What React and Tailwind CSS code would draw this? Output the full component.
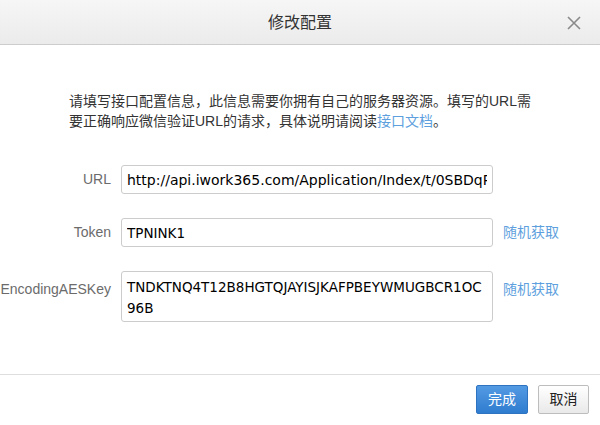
const inputClass =
  "h-[29px] w-[372px] rounded-[3px] border border-[#cccccc] bg-white px-[5px] text-[13.5px] text-black outline-none font-['DejaVu_Sans',sans-serif]";

const labelClass = "text-right text-[14px] text-[#6b6b6b]";
const linkClass = "text-[14px] text-[#5e9fde]";

export default function App() {
  return (
    <div className="flex h-[425px] w-[600px] flex-col overflow-hidden bg-white font-['Liberation_Sans','Noto_Sans_CJK_SC',sans-serif]">
      <div className="relative flex h-[45px] shrink-0 items-center justify-center border-b border-[#cdcdcd] bg-gradient-to-b from-[#f6f6f6] to-[#ebebeb]">
        <h1 className="pt-[1px] text-[16px] text-[#333333]">修改配置</h1>
        <button className="absolute right-[19px] top-[16px] text-[#8a8a8a]" aria-label="close">
          <svg width="14" height="14" viewBox="0 0 14 14" fill="none" stroke="currentColor" strokeWidth="1.6">
            <path d="M1 1 L13 13 M13 1 L1 13" />
          </svg>
        </button>
      </div>

      <div className="flex-1">
        <p className="pl-[69px] pr-[60px] pt-[46px] text-[14px] leading-[20px] text-[#333333]">
          请填写接口配置信息，此信息需要你拥有自己的服务器资源。填写的URL需
          <br />
          要正确响应微信验证URL的请求，具体说明请阅读
          <a className="text-[#5e9fde]">接口文档</a>。
        </p>

        <div className="mt-[34px] grid grid-cols-[111px_372px_auto] items-center gap-x-[10px] gap-y-[24px]">
          <label className={labelClass}>URL</label>
          <input
            className={`${inputClass} text-[14px]`}
            defaultValue="http://api.iwork365.com/Application/Index/t/0SBDqPbmLq"
          />
          <span />

          <label className={labelClass}>Token</label>
          <input className={inputClass} defaultValue="TPNINK1" />
          <a className={linkClass}>随机获取</a>

          <label className={`${labelClass} self-start pt-[8px]`}>EncodingAESKey</label>
          <textarea
            className={`${inputClass} h-[51px] resize-none overflow-hidden break-all pt-[5px] leading-[21px]`}
            defaultValue="TNDKTNQ4T12B8HGTQJAYISJKAFPBEYWMUGBCR1OC96B"
          />
          <a className={`${linkClass} self-start pt-[8px]`}>随机获取</a>
        </div>
      </div>

      <div className="flex h-[51px] shrink-0 justify-end gap-[10px] border-t border-[#dedede] pr-[11px] pt-[10px]">
        <button className="h-[29px] w-[52px] rounded-[2px] border border-[#2d73c2] bg-gradient-to-b from-[#539ae3] to-[#2f7ccf] text-[14px] text-white">
          完成
        </button>
        <button className="h-[29px] w-[51px] rounded-[2px] border border-[#bdbdbd] bg-gradient-to-b from-[#ffffff] to-[#e9e9e9] text-[14px] text-[#222222]">
          取消
        </button>
      </div>
    </div>
  );
}
